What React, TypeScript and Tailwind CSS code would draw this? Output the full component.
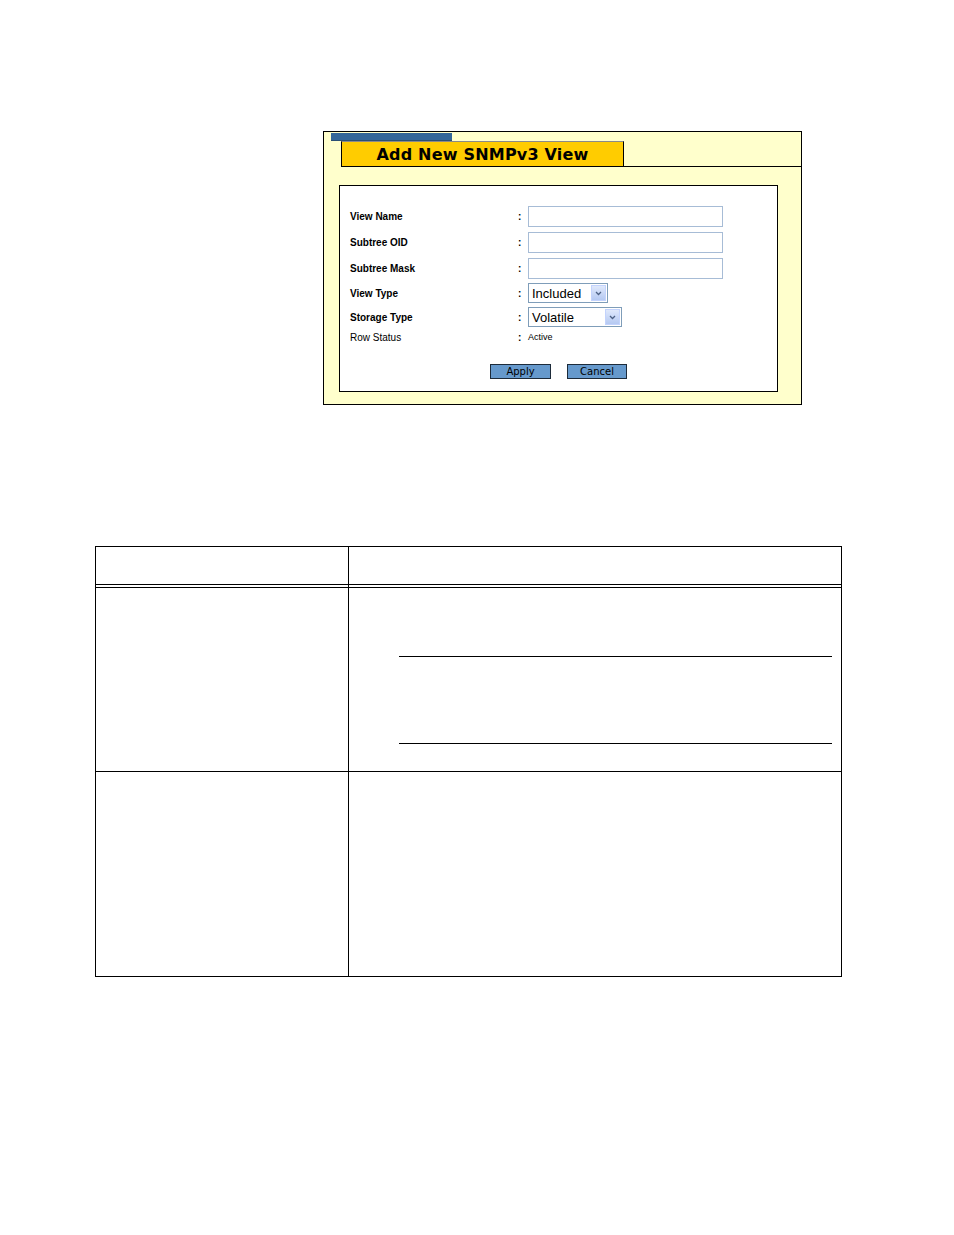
import React from "react";

const labelCls = "w-[168px] text-[10px] font-bold text-black [font-family:'Liberation_Sans',Arial,sans-serif]";
const colonCls = "w-[10px] text-[10px] font-bold text-black [font-family:'Liberation_Sans',Arial,sans-serif]";

function Arrow() {
  return (
    <div className="w-[15px] h-[16px] mr-[1px] bg-gradient-to-b from-[#dfe8fb] to-[#b5c9f2] border border-[#c3d3fd] flex items-center justify-center">
      <svg width="7" height="5" viewBox="0 0 7 5">
        <path d="M1 1 L3.5 3.5 L6 1" stroke="#4d6185" strokeWidth="1.3" fill="none" />
      </svg>
    </div>
  );
}

function Select({ text, width }: { text: string; width: string }) {
  return (
    <div className={`${width} h-[20px] border border-[#7f9db9] bg-white flex items-center justify-between`}>
      <span className="pl-[3px] text-[13px] leading-none text-black [font-family:'Liberation_Sans',Arial,sans-serif]">{text}</span>
      <Arrow />
    </div>
  );
}

function Row({ label, h, children, bold = true }: { label: string; h: string; children: React.ReactNode; bold?: boolean }) {
  return (
    <div className={`flex items-center ${h}`}>
      <div className={bold ? labelCls : "w-[168px] text-[10px] text-black [font-family:'Liberation_Sans',Arial,sans-serif]"}>{label}</div>
      <div className={colonCls}>:</div>
      {children}
    </div>
  );
}

export default function App() {
  const input = "w-[195px] h-[21px] border border-[#a7bcd6] bg-white";
  return (
    <div className="w-[954px] h-[1235px] bg-white pt-[131px]">
      {/* Panel */}
      <div className="ml-[323px] w-[479px] h-[274px] border border-black bg-[#ffffcc] flex flex-col">
        <div className="ml-[7px] mt-[1px] w-[121px] h-[8px] bg-[#336699] border-b border-[#2a4f74]" />
        <div className="flex items-end">
          <div className="ml-[17px] w-[283px] h-[26px] bg-[#ffcc00] border-l border-r border-b border-black border-t border-t-[#8a8a8a] flex items-center justify-center pt-[2px]">
            <span className="text-[16px] font-bold leading-none text-black [font-family:'DejaVu_Sans',Verdana,sans-serif] tracking-[0.2px]">
              Add New SNMPv3 View
            </span>
          </div>
          <div className="flex-1 border-b border-black" />
        </div>
        <div className="ml-[15px] mt-[18px] w-[439px] h-[207px] border border-black bg-white pt-[17px] pl-[10px]">
          <Row label="View Name" h="h-[26px]">
            <div className={input} />
          </Row>
          <Row label="Subtree OID" h="h-[26px]">
            <div className={input} />
          </Row>
          <Row label="Subtree Mask" h="h-[26px]">
            <div className={input} />
          </Row>
          <Row label="View Type" h="h-[24px]">
            <Select text="Included" width="w-[80px]" />
          </Row>
          <Row label="Storage Type" h="h-[24px]">
            <Select text="Volatile" width="w-[94px]" />
          </Row>
          <Row label="Row Status" h="h-[17px]" bold={false}>
            <span className="text-[9px] text-black [font-family:'Liberation_Sans',Arial,sans-serif]">Active</span>
          </Row>
          <div className="flex gap-[16px] pl-[140px] mt-[18px]">
            <div className="w-[61px] h-[15px] bg-[#6699cc] border border-[#1d2b3a] flex items-center justify-center text-[10px] leading-none text-black [font-family:'DejaVu_Sans',Verdana,sans-serif]">
              Apply
            </div>
            <div className="w-[60px] h-[15px] bg-[#6699cc] border border-[#1d2b3a] flex items-center justify-center text-[10px] leading-none text-black [font-family:'DejaVu_Sans',Verdana,sans-serif]">
              Cancel
            </div>
          </div>
        </div>
      </div>

      {/* Table */}
      <div className="ml-[95px] mt-[141px] w-[747px] border border-black">
        <div className="flex h-[38px] border-b border-black">
          <div className="w-[253px] border-r border-black" />
          <div className="flex-1" />
        </div>
        <div className="flex h-[2px]">
          <div className="w-[253px] border-r border-black" />
          <div className="flex-1" />
        </div>
        <div className="flex h-[184px] border-t border-black">
          <div className="w-[253px] border-r border-black" />
          <div className="flex-1 flex flex-col pl-[50px] pr-[9px] pt-[68px]">
            <div className="border-t border-black" />
            <div className="h-[86px]" />
            <div className="border-t border-black" />
          </div>
        </div>
        <div className="flex h-[205px] border-t border-black">
          <div className="w-[253px] border-r border-black" />
          <div className="flex-1" />
        </div>
      </div>
    </div>
  );
}
